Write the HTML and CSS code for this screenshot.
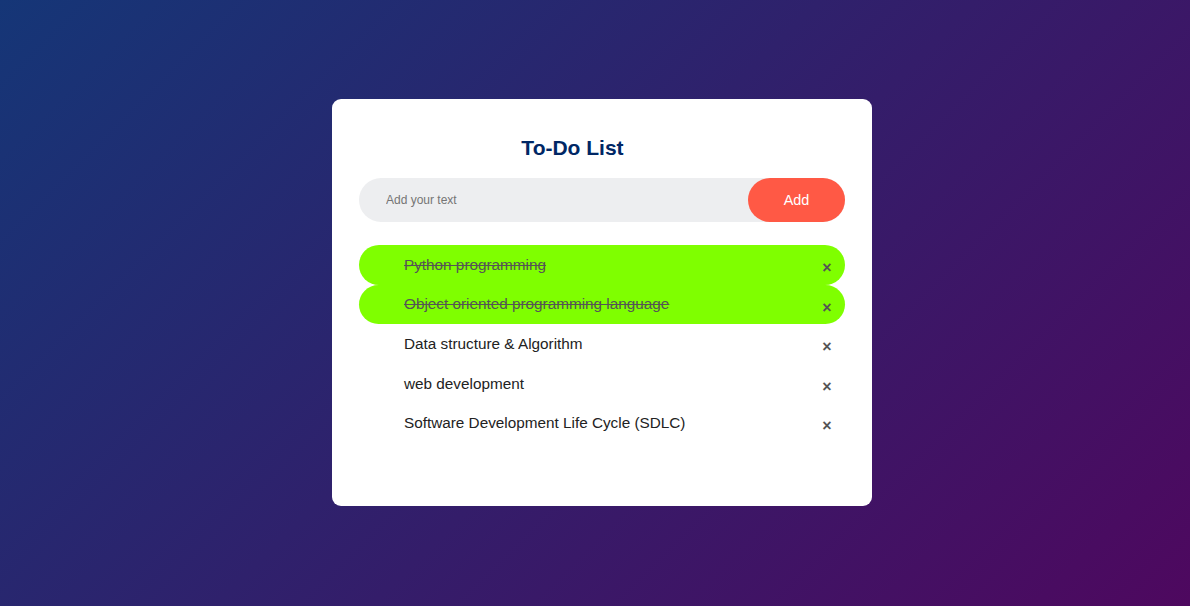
FILE: index.html
```html
<!DOCTYPE html>
<html>
<head>
<meta charset="utf-8">
<link rel="stylesheet" href="styles.css">
</head>
<body>
<div class="app">
  <h2 class="title">To-Do List</h2>
  <div class="row">
    <input class="field" type="text" placeholder="Add your text">
    <button class="add">Add</button>
  </div>
  <ul class="list">
    <li class="item checked">Python programming<span class="del">&times;</span></li>
    <li class="item checked">Object oriented programming language<span class="del">&times;</span></li>
    <li class="item">Data structure &amp; Algorithm<span class="del">&times;</span></li>
    <li class="item">web development<span class="del">&times;</span></li>
    <li class="item">Software Development Life Cycle (SDLC)<span class="del">&times;</span></li>
  </ul>
</div>
</body>
</html>
```

FILE: styles.css
```css
* { margin: 0; padding: 0; box-sizing: border-box; }
html, body { height: 100%; }
body {
  font-family: "Liberation Sans", Arial, sans-serif;
  background: linear-gradient(135deg, #153677, #4e085f);
  overflow: hidden;
}
.app {
  width: 540px;
  margin: 99px 0 0 332px;
  background: #fff;
  border-radius: 9px;
  padding: 36px 27px 63px;
}
.title {
  color: #002765;
  font-size: 21px;
  font-weight: bold;
  line-height: 25px;
  text-align: center;
  padding-right: 59px;
  margin-bottom: 18px;
}
.row {
  display: flex;
  align-items: center;
  justify-content: space-between;
  background: #edeef0;
  border-radius: 27px;
  padding-left: 18px;
  height: 44px;
  margin-bottom: 23px;
}
.field {
  flex: 1;
  border: none;
  outline: none;
  background: transparent;
  padding: 9px;
  font-family: "Liberation Sans", Arial, sans-serif;
  font-size: 12px;
  color: #333;
}
.field::placeholder { color: #757575; }
.add {
  border: none;
  outline: none;
  height: 44px;
  width: 97px;
  background: #ff5945;
  color: #fff;
  font-family: "Liberation Sans", Arial, sans-serif;
  font-size: 14.4px;
  border-radius: 36px;
}
.list { list-style: none; }
.item {
  position: relative;
  font-size: 15.3px;
  line-height: 18px;
  color: #222;
  padding: 10.8px 7px 10.8px 45px;
  border-radius: 20px;
}
.item.checked {
  background: #7fff00;
  color: #555;
  text-decoration: line-through;
}
.del {
  position: absolute;
  right: 0;
  top: 5px;
  width: 36px;
  height: 36px;
  line-height: 36px;
  text-align: center;
  font-size: 16px;
  font-weight: bold;
  color: #555;
  text-decoration: none;
  display: inline-block;
}
```
